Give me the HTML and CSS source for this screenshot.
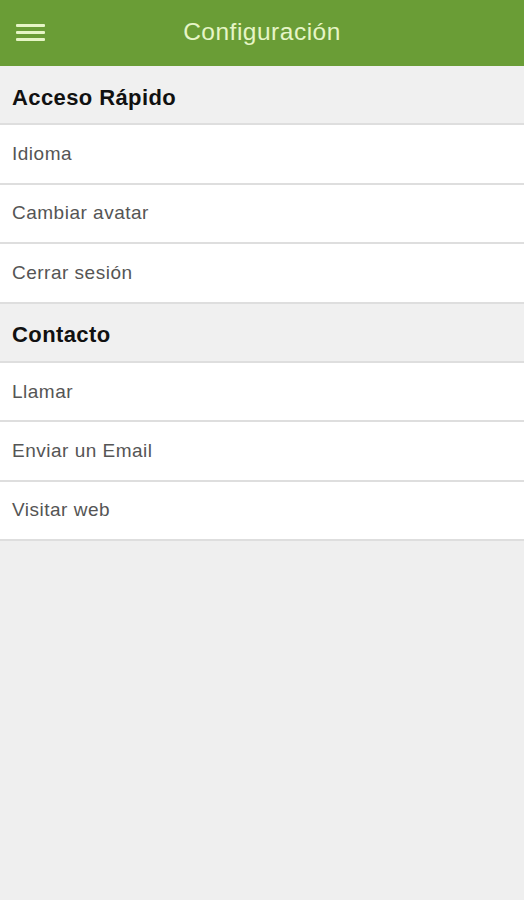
FILE: index.html
```html
<!DOCTYPE html>
<html lang="es">
<head>
<meta charset="utf-8">
<title>Configuración</title>
<link rel="stylesheet" href="styles.css">
</head>
<body>
<header class="topbar">
  <button class="menu-btn" aria-label="Menú">
    <svg width="30" height="18" viewBox="0 0 30 18"><rect x="0" y="0" width="29" height="3" rx="1"/><rect x="0" y="7" width="29" height="3" rx="1"/><rect x="0" y="14" width="29" height="3" rx="1"/></svg>
  </button>
  <h1 class="title">Configuración</h1>
</header>
<main>
  <div class="section">Acceso Rápido</div>
  <div class="row">Idioma</div>
  <div class="row">Cambiar avatar</div>
  <div class="row">Cerrar sesión</div>
  <div class="section">Contacto</div>
  <div class="row">Llamar</div>
  <div class="row">Enviar un Email</div>
  <div class="row">Visitar web</div>
</main>
</body>
</html>
```

FILE: styles.css
```css
html, body {
  margin: 0;
  padding: 0;
  background: #efefef;
  font-family: "Liberation Sans", Arial, sans-serif;
}
.topbar {
  height: 66px;
  background: #6a9d36;
  display: flex;
  align-items: center;
  justify-content: center;
  position: relative;
}
.menu-btn {
  position: absolute;
  left: 16px;
  top: 24px;
  padding: 0;
  border: 0;
  background: none;
  display: flex;
}
.menu-btn svg { fill: #e6f5c6; }
.title {
  margin: 0;
  font-size: 24.5px;
  letter-spacing: 0.5px;
  font-weight: normal;
  color: #e6f5c6;
  padding-bottom: 2px;
}
.section, .row {
  height: 57.4px;
  border-bottom: 2px solid #dedede;
  display: flex;
  align-items: center;
  padding-left: 12px;
  box-sizing: content-box;
}
.section {
  background: #f0f0f0;
  font-weight: bold;
  font-size: 22px;
  letter-spacing: 0.4px;
  color: #111;
  height: 51.4px;
  padding-top: 6px;
}
.row {
  background: #fff;
  font-size: 19px;
  letter-spacing: 0.5px;
  color: #555;
}
```
